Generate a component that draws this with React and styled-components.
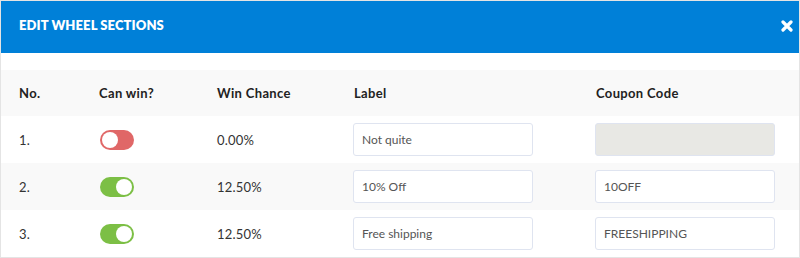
import styled, { createGlobalStyle } from 'styled-components';

const Global = createGlobalStyle`
  html, body { margin: 0; padding: 0; background: #fff; }
  body { font-family: Lato, "Open Sans", sans-serif; }
  * { box-sizing: border-box; }
`;

const rows = [
  { no: '1.', on: false, chance: '0.00%', label: 'Not quite', code: '', disabled: true },
  { no: '2.', on: true, chance: '12.50%', label: '10% Off', code: '10OFF' },
  { no: '3.', on: true, chance: '12.50%', label: 'Free shipping', code: 'FREESHIPPING' },
];

const App = () => {
  return (
    <>
      <Global />
      <Modal>
        <Header>
          <Title>EDIT WHEEL SECTIONS</Title>
          <Close aria-label="close">
            <svg width="12" height="12" viewBox="0 0 12 12">
              <path d="M2 2 L10 10 M10 2 L2 10" stroke="#fff" strokeWidth="3.2" strokeLinecap="round" />
            </svg>
          </Close>
        </Header>
        <Body>
          <Row $head>
            <HeadCell>No.</HeadCell>
            <HeadCell>Can win?</HeadCell>
            <HeadCell>Win Chance</HeadCell>
            <HeadCell>Label</HeadCell>
            <HeadCell>Coupon Code</HeadCell>
          </Row>
          {rows.map((r, i) => (
            <Row key={r.no} $alt={i % 2 === 1}>
              <Cell>{r.no}</Cell>
              <Cell>
                <Toggle $on={r.on}><Knob $on={r.on} /></Toggle>
              </Cell>
              <Cell>{r.chance}</Cell>
              <Cell><Field defaultValue={r.label} /></Cell>
              <Cell><Field defaultValue={r.code} disabled={r.disabled} /></Cell>
            </Row>
          ))}
        </Body>
      </Modal>
    </>
  );
};

const Modal = styled.div({
  width: '800px',
  height: '258px',
  border: '1px solid #e4e4e4',
  display: 'flex',
  flexDirection: 'column',
  background: '#fff',
});

const Header = styled.div({
  height: '52px',
  background: '#0080d8',
  display: 'flex',
  alignItems: 'center',
  justifyContent: 'space-between',
  padding: '0 6px 0 18px',
});

const Title = styled.h1({
  margin: 0,
  color: '#fff',
  fontSize: '13px',
  fontWeight: 800,
  letterSpacing: '0.1px',
  marginTop: '-5px',
});

const Close = styled.div({
  width: '12px',
  height: '12px',
  display: 'flex',
  marginTop: '-2px',
});

const Body = styled.div({
  paddingTop: '17px',
  display: 'flex',
  flexDirection: 'column',
});

const Row = styled.div(({ $head, $alt }) => ({
  display: 'grid',
  gridTemplateColumns: '80px 118px 137px 242px 1fr',
  alignItems: 'center',
  height: $head ? '46px' : '47px',
  padding: '0 0 0 18px',
  background: $head || $alt ? '#f9f9f9' : '#fff',
}));

const HeadCell = styled.div({
  fontSize: '13px',
  fontWeight: 700,
  color: '#222',
  letterSpacing: '0.35px',
});

const Cell = styled.div({
  fontSize: '13px',
  color: '#333',
  letterSpacing: '0.2px',
  display: 'flex',
  alignItems: 'center',
});

const Toggle = styled.div(({ $on }) => ({
  width: '34px',
  height: '20px',
  borderRadius: '10px',
  background: $on ? '#7cbf45' : '#e06767',
  display: 'flex',
  alignItems: 'center',
  justifyContent: $on ? 'flex-end' : 'flex-start',
  padding: '0 2px',
  marginLeft: '1px',
}));

const Knob = styled.span({
  width: '16px',
  height: '16px',
  borderRadius: '50%',
  background: '#fff',
});

const Field = styled.input({
  width: '180px',
  height: '33px',
  border: '1px solid #dfe4f0',
  borderRadius: '3px',
  padding: '0 8px',
  fontFamily: 'inherit',
  fontSize: '12px',
  color: '#555',
  background: '#fff',
  marginLeft: '-1px',
  outline: 'none',
  '&:disabled': {
    background: '#e8e8e4',
  },
});

export default App;
